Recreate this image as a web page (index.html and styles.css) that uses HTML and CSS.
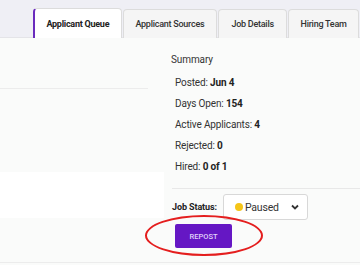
FILE: index.html
```html
<!DOCTYPE html>
<html>
<head>
<meta charset="utf-8">
<link rel="stylesheet" href="styles.css">
</head>
<body>
<div class="page">
  <div class="tabbar">
    <div class="tab active">Applicant Queue</div>
    <div class="tab">Applicant Sources</div>
    <div class="tab">Job Details</div>
    <div class="tab">Hiring Team</div>
  </div>
  <div class="content">
    <div class="left">
      <div class="lspace"></div>
      <div class="lline"></div>
      <div class="lspace2"></div>
      <div class="lwhite"></div>
    </div>
    <div class="summary">
      <div class="title">Summary</div>
      <div class="row">Posted: <b>Jun 4</b></div>
      <div class="row">Days Open: <b>154</b></div>
      <div class="row">Active Applicants: <b>4</b></div>
      <div class="row">Rejected: <b>0</b></div>
      <div class="row">Hired: <b>0 of 1</b></div>
      <div class="divider"></div>
      <div class="status">
        <span class="slabel">Job Status:</span>
        <div class="select">
          <span class="dot"></span>
          <span class="sval">Paused</span>
          <svg class="chev" width="10" height="8" viewBox="0 0 10 8"><path d="M2 2.5 L5 5.5 L8 2.5" fill="none" stroke="#333" stroke-width="1.8"/></svg>
        </div>
      </div>
      <div class="btnwrap">
        <button class="repost">REPOST</button>
        <div class="ring"></div>
      </div>
    </div>
  </div>
</div>
</body>
</html>
```
FILE: styles.css
```css
html, body { margin: 0; padding: 0; }
body {
  width: 360px; height: 265px; overflow: hidden;
  font-family: Roboto, "Liberation Sans", sans-serif;
  background: #fafbfa;
  color: #333;
}
.page { width: 360px; height: 265px; display: flex; flex-direction: column; }
.tabbar {
  height: 38px;
  background: #efeff5;
  display: flex;
  align-items: flex-end;
  padding-left: 33px;
  box-sizing: border-box;
  border-bottom: 1px solid #e4e4e8;
}
.tab {
  height: 29px;
  box-sizing: border-box;
  display: flex; align-items: center; justify-content: center;
  font-size: 9px;
  letter-spacing: -0.25px;
  color: #333;
  background: #f5f5f5;
  border: 1px solid #dcdcdc;
  border-bottom: none;
  border-radius: 4px 4px 0 0;
  margin-right: 1px;
  font-weight: 500;
  margin-bottom: -1px;
}
.tab:nth-child(1) { width: 90px; margin-right: 1px; }
.tab:nth-child(2) { width: 96px; }
.tab:nth-child(3) { width: 70px; }
.tab:nth-child(4) { width: 72px; }
.tab.active {
  background: #ffffff;
  border-left: 2px solid #6a2bbd;
  font-weight: 700;
  color: #222;
  height: 30px;
}
.content { flex: 1; display: flex; border-bottom: 1px solid #ececec; margin-bottom: 2px; }
.left { width: 164px; display: flex; flex-direction: column; }
.lspace { height: 50px; }
.lline { height: 1px; background: #ececec; width: 148px; }
.lspace2 { height: 83px; }
.lwhite { height: 46px; background: #ffffff; }
.summary { flex: 1; padding: 16px 0 0 7px; font-size: 10px; color: #333; }
.title { font-size: 10px; margin-bottom: 11px; letter-spacing: -0.1px; }
.row { margin-left: 4px; height: 21px; line-height: 13px; letter-spacing: -0.15px; }
.row b { font-weight: 700; color: #222; }
.divider { height: 1px; background: #e8e8e8; margin: 7px 0 5px 1px; }
.status { display: flex; align-items: center; margin-left: 1px; }
.slabel { font-weight: 700; font-size: 9px; color: #222; letter-spacing: -0.1px; }
.select {
  margin-left: 6px;
  width: 85px; height: 26px; box-sizing: border-box;
  background: #fff;
  border: 1px solid #d8d8d8;
  border-radius: 3px;
  display: flex; align-items: center;
  padding-left: 11px;
}
.dot { width: 8px; height: 8px; border-radius: 50%; background: #f5c518; margin-right: 2px; }
.sval { font-size: 10.5px; color: #333; letter-spacing: -0.2px; }
.chev { margin-left: 11px; }
.btnwrap { position: relative; margin-top: 4px; margin-left: 4px; height: 30px; }
.repost {
  display: block;
  width: 57px; height: 24px;
  background: #6517c4;
  color: #e0d2fa;
  border: none; border-radius: 2px;
  font-family: Roboto, "Liberation Sans", sans-serif;
  font-size: 7.5px;
  font-weight: 500;
  padding: 0;
}
.ring {
  position: absolute;
  left: -30px; top: -9px;
  width: 118px; height: 41px;
  box-sizing: border-box;
  border: 2.5px solid #e41e1e;
  border-radius: 50%;
}
```
